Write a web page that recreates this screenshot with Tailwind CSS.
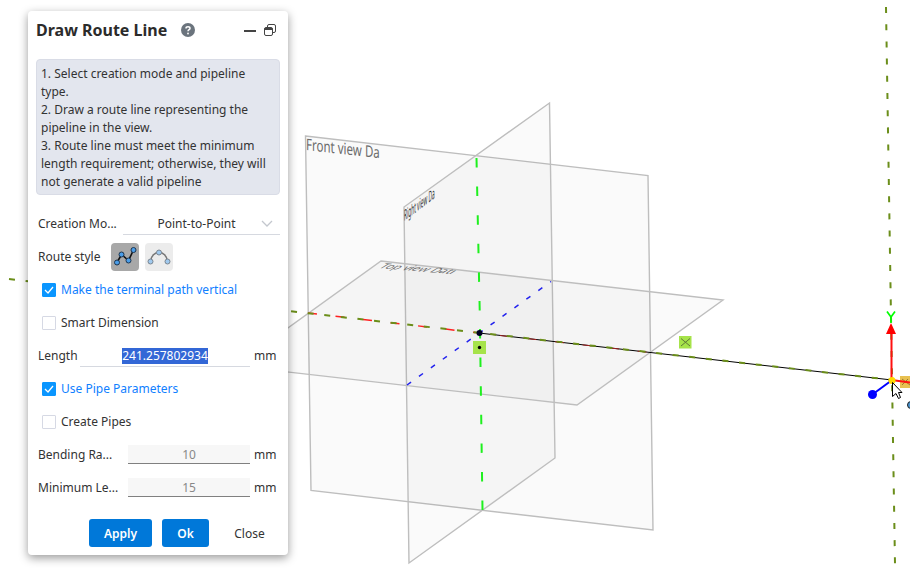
<!DOCTYPE html>
<html lang="en">
<head>
  <meta charset="UTF-8">
  <meta name="viewport" content="width=device-width, initial-scale=1.0">
  <script src="https://cdn.jsdelivr.net/npm/@tailwindcss/browser@4"></script>
  <title>Draw Route Line</title>
</head>
<body class="bg-white text-[#333] text-[12px] leading-[18px] font-['Noto_Sans',sans-serif]">
  <main class="relative min-h-screen overflow-hidden pl-7 pt-[11px] pb-4">

    <!-- Viewport -->
    <svg class="absolute inset-0 w-full h-full" viewBox="0 0 910 571" preserveAspectRatio="xMinYMin slice" fill="none">
      <!-- Datum planes -->
      <g fill="#000" fill-opacity="0.02" stroke="#bebebe" stroke-width="1.400">
        <path d="M305.500 136 648 175.500 653 530 311 490.500Z" />
        <path d="M549.500 103 555 458 409 563 404 207Z" />
        <path d="M381 261 723 300 577 405 235 366Z" />
      </g>
      <g font-family="Noto Sans" fill="#6b6b6b">
        <text transform="matrix(.72 .08 0 1 306 150)" font-size="16">Front view Da</text>
        <text transform="matrix(.32 -.24 0 1 404 221)" font-size="15" fill="#333">Right view Da</text>
        <text transform="matrix(.98 .08 -.9 .55 378 268)" font-size="12">Top view Datı</text>
      </g>

      <!-- Axes -->
      <path d="M476.500 158 480 324" stroke="#1ef01e" stroke-width="2" stroke-dasharray="9.500 19.100" />
      <path d="M480 329 482.500 510" stroke="#1ef01e" stroke-width="2" stroke-dasharray="9.500 19.100" />
      <path d="M407 385 551 281.500" stroke="#2222ee" stroke-width="1.500" stroke-dasharray="5 9.700" />
      <path d="M308 313 479 333" stroke="#ff2020" stroke-width="1.500" stroke-dasharray="9 18.700" />
      <path d="M479 333 892 380" stroke="#000" />
      <path d="M500 335.500 650 352.500" stroke="#a02020" stroke-dasharray="9 18.700" />
      <path d="M9 279 892 380" stroke="#6b8e1a" stroke-width="2" stroke-dasharray="6 10.700" />
      <path d="M886 7 895 564" stroke="#6b8e1a" stroke-width="2" stroke-dasharray="6 11.200" />

      <!-- Start point -->
      <rect x="473" y="341" width="13" height="13" fill="#a6e34a" />
      <circle cx="479.500" cy="347.500" r="1.700" fill="#000" />
      <circle cx="479.500" cy="333" r="3" fill="#000022" />
      <rect x="679" y="336" width="12.500" height="12.500" fill="#a6e34a" />
      <path d="M681 338.500 690 346M690 338.500 681 346" stroke="#5f7a38" />

      <!-- Triad -->
      <rect x="900" y="376" width="12" height="12" fill="#e8c050" />
      <path d="M902 379 910 385M908 379 902 385" stroke="#9a7a30" />
      <path d="M891.500 380V330M891.500 380 910 382.500" stroke="#ff1010" stroke-width="2" />
      <path d="M891 323 896 334H886Z" fill="#ff0000" />
      <path d="M887 311.500 891 317 895 311.500M891 317V323" stroke="#00ff00" stroke-width="1.700" />
      <path d="M891.500 380.500 873 394" stroke="#0000ff" stroke-width="2" />
      <circle cx="872.500" cy="394.500" r="4.500" fill="#0000ff" />
      <circle cx="892" cy="380.500" r="3.500" fill="#ffd800" />
      <circle cx="911" cy="405" r="3.500" fill="#4a94d0" stroke="#222" />
      <path d="M892.500 382.500V396.500L896 393.500 898.500 398.500 900.500 397.500 898.500 392.500H902Z" fill="#fff" stroke="#000" />
    </svg>

    <!-- Dialog -->
    <form class="relative flex flex-col w-[260px] rounded bg-white px-2 pb-2 shadow-[0_3px_10px_rgba(0,0,0,0.4)]">
      <header class="flex items-center h-[38px]">
        <h1 class="text-base font-bold text-[#2b2b2b]">Draw Route Line</h1>
        <button type="button" aria-label="Help" class="ml-[14px]">
          <svg class="w-[14px] h-[14px]" viewBox="0 0 14 14">
            <circle cx="7" cy="7" r="7" fill="#6b747d" />
            <path d="M5 5.400C5 3.200 9 3.200 9 5.400 9 6.700 7 6.700 7 8.300" fill="none" stroke="#fff" stroke-width="1.500" />
            <circle cx="7" cy="10.500" r="0.900" fill="#fff" />
          </svg>
        </button>
        <button type="button" aria-label="Minimize" class="ml-auto">
          <svg class="w-3 h-3" viewBox="0 0 12 12"><path d="M0 7H12" stroke="#444" stroke-width="2" /></svg>
        </button>
        <button type="button" aria-label="Restore" class="ml-2 mr-1">
          <svg class="w-3 h-3" viewBox="0 0 12 12" fill="none" stroke="#444">
            <rect x="0.500" y="3.500" width="8" height="8" rx="1.500" />
            <path d="M0.500 5H8.500" stroke-width="2" />
            <path d="M3.500 3V2Q3.500 0.500 5 0.500H10Q11.500 0.500 11.500 2V7Q11.500 8.500 10 8.500H9" />
          </svg>
        </button>
      </header>

      <div class="mt-[10px] rounded-sm border border-[#d9dce6] bg-[#e3e6ee] px-1 pt-[5px] pb-[3px]">
        <p>1. Select creation mode and pipeline type.</p>
        <p>2. Draw a route line representing the pipeline in the view.</p>
        <p>3. Route line must meet the minimum length requirement; otherwise, they will not generate a valid pipeline</p>
      </div>

      <div class="mt-3 flex flex-col pl-[2px]">
        <div class="flex items-center h-[33px]">
          <label for="mode" class="w-[85px]">Creation Mo...</label>
          <div class="relative flex-1">
            <select id="mode" class="w-full h-[22px] appearance-none border-b border-[#d6d9e0] pt-px pr-[10px] text-center outline-none">
              <option>Point-to-Point</option>
            </select>
            <svg class="absolute right-[7px] top-[7px] w-3 h-2 pointer-events-none" viewBox="0 0 12 8"><path d="M1 1 6 6 11 1" fill="none" stroke="#c3c7ce" stroke-width="1.300" /></svg>
          </div>
        </div>

        <div class="flex items-center h-[33px]">
          <span class="w-[73px]">Route style</span>
          <div class="flex gap-[6px]">
            <button type="button" aria-label="Polyline" class="rounded-sm bg-[#a8a8a8]">
              <svg class="w-7 h-7" viewBox="0 0 28 28">
                <path d="M6 19.500 10.500 11.500 17.500 17.500 22.500 7" fill="none" stroke="#111" stroke-width="1.600" />
                <g fill="#4a9de8" stroke="#1c3550" stroke-width="1">
                  <circle cx="6" cy="19.500" r="2.500" /><circle cx="10.500" cy="11.500" r="2.500" />
                  <circle cx="17.500" cy="17.500" r="2.500" /><circle cx="22.500" cy="7" r="2.500" />
                </g>
              </svg>
            </button>
            <button type="button" aria-label="Arc" class="rounded-sm bg-[#ececec]">
              <svg class="w-7 h-7" viewBox="0 0 28 28">
                <path d="M5.500 18.500C6.500 6.500 21.500 6.500 22.500 18.500" fill="none" stroke="#777" stroke-width="1.600" />
                <g fill="#a0c9ee" stroke="#7a8590" stroke-width="1">
                  <circle cx="5.500" cy="18.500" r="2.500" /><circle cx="14" cy="9.500" r="2.500" /><circle cx="22.500" cy="18.500" r="2.500" />
                </g>
              </svg>
            </button>
          </div>
        </div>

        <label class="flex items-center h-[33px] gap-[5px] pl-1 text-[#1080ff]">
          <span class="relative flex">
            <input type="checkbox" checked class="peer w-[14px] h-[14px] appearance-none rounded-[1px] border border-[#d6d9e4] checked:border-[#0a96ff] checked:bg-[#0a96ff]">
            <svg class="absolute inset-0 hidden w-[14px] h-[14px] pointer-events-none peer-checked:block" viewBox="0 0 14 14"><path d="M3 7 6 10 11 4" fill="none" stroke="#fff" stroke-width="1.300" /></svg>
          </span>
          Make the terminal path vertical
        </label>

        <label class="flex items-center h-[33px] gap-[5px] pl-1">
          <input type="checkbox" class="w-[14px] h-[14px] appearance-none rounded-[1px] border border-[#d6d9e4] checked:bg-[#0a96ff]">
          Smart Dimension
        </label>

        <div class="flex items-center h-[33px]">
          <label for="length" class="w-[42px]">Length</label>
          <div class="flex flex-1 justify-center h-[22px] border-b border-[#d6d9e0]">
            <input id="length" type="text" value="241.257802934" class="h-4 mt-[3px] field-sizing-content bg-[#3367d6] text-white text-center outline-none">
          </div>
          <span class="w-[30px] pl-1">mm</span>
        </div>

        <label class="flex items-center h-[33px] gap-[5px] pl-1 text-[#1080ff]">
          <span class="relative flex">
            <input type="checkbox" checked class="peer w-[14px] h-[14px] appearance-none rounded-[1px] border border-[#d6d9e4] checked:border-[#0a96ff] checked:bg-[#0a96ff]">
            <svg class="absolute inset-0 hidden w-[14px] h-[14px] pointer-events-none peer-checked:block" viewBox="0 0 14 14"><path d="M3 7 6 10 11 4" fill="none" stroke="#fff" stroke-width="1.300" /></svg>
          </span>
          Use Pipe Parameters
        </label>

        <label class="flex items-center h-[33px] gap-[5px] pl-1">
          <input type="checkbox" class="w-[14px] h-[14px] appearance-none rounded-[1px] border border-[#d6d9e4] checked:bg-[#0a96ff]">
          Create Pipes
        </label>

        <div class="flex items-center h-[33px]">
          <label for="radius" class="w-[90px]">Bending Ra...</label>
          <input id="radius" type="text" value="10" disabled class="flex-1 min-w-0 h-[19px] border-b border-[#808080] bg-[#f7f7f7] text-center text-[#888]">
          <span class="w-[30px] pl-1">mm</span>
        </div>

        <div class="flex items-center h-[33px]">
          <label for="minimum" class="w-[90px]">Minimum Le...</label>
          <input id="minimum" type="text" value="15" disabled class="flex-1 min-w-0 h-[19px] border-b border-[#808080] bg-[#f7f7f7] text-center text-[#888]">
          <span class="w-[30px] pl-1">mm</span>
        </div>
      </div>

      <footer class="mt-[15px] flex justify-end gap-[10px]">
        <button type="submit" class="w-[63px] h-7 pt-px rounded-[3px] bg-[#0078d9] font-semibold text-white">Apply</button>
        <button type="button" class="w-[47px] h-7 pt-px rounded-[3px] bg-[#0078d9] font-semibold text-white">Ok</button>
        <button type="button" class="w-[61px] h-7 pt-px">Close</button>
      </footer>
    </form>
  </main>
</body>
</html>
